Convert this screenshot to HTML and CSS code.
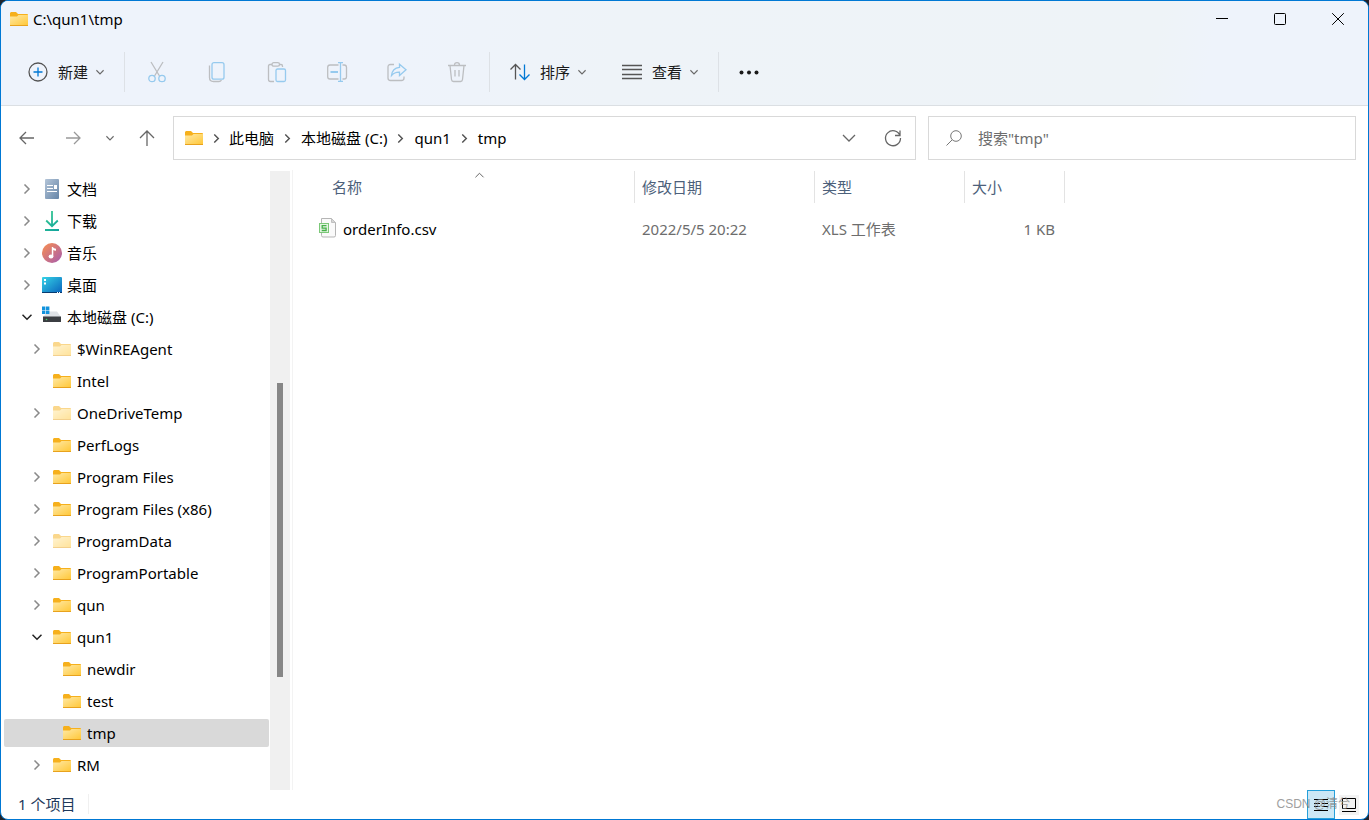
FILE: index.html
```html
<!DOCTYPE html>
<html lang="zh-CN">
<head>
<meta charset="utf-8">
<title>C:\qun1\tmp</title>
<link rel="stylesheet" href="styles.css">
</head>
<body>
<svg class="defs" aria-hidden="true">
  <defs>
    <linearGradient id="g-folder" x1="0" y1="0" x2="1" y2="1"><stop offset="0" stop-color="#ffe9a6"/><stop offset="1" stop-color="#ffc83a"/></linearGradient>
    <linearGradient id="g-doc" x1="0" y1="0" x2="1" y2="1"><stop offset="0" stop-color="#b4c5d8"/><stop offset="1" stop-color="#6585a8"/></linearGradient>
    <linearGradient id="g-down" gradientUnits="userSpaceOnUse" x1="0" y1="0" x2="20" y2="20"><stop offset="0" stop-color="#3ccf8e"/><stop offset="1" stop-color="#0c9f9f"/></linearGradient>
    <linearGradient id="g-music" x1="0" y1="0" x2="1" y2="1"><stop offset="0.1" stop-color="#f28a58"/><stop offset="1" stop-color="#a55bb0"/></linearGradient>
    <linearGradient id="g-desk" x1="0" y1="0" x2="1" y2="1"><stop offset="0" stop-color="#35d3e6"/><stop offset="1" stop-color="#0a63bd"/></linearGradient>
    <symbol id="folder" viewBox="0 0 20 20"><path d="M1 4.600q0-1.600 1.200-1.600H7l2 2h9.200q.8 0 .8 1v4H1z" fill="#f6b01c"/><path d="M1 7.500h7L9.500 6H19v10H1z" fill="url(#g-folder)"/><path d="M1 16h18v1H1z" fill="#e8a21d"/></symbol>
    <symbol id="chev-r" viewBox="0 0 10 10"><path d="M2.500 .500 7 5 2.500 9.500"/></symbol>
    <symbol id="chev-d" viewBox="0 0 10 10"><path d="M.500 2.800 5 7.300 9.500 2.800"/></symbol>
  </defs>
</svg>

<div class="window">
  <header class="top">
    <div class="titlebar">
      <svg class="icon"><use href="#folder"/></svg>
      <h1 class="title">C:\qun1\tmp</h1>
      <div class="caption">
        <button class="cap" aria-label="最小化"><svg viewBox="0 0 12 12"><path d="M0 5.500h12"/></svg></button>
        <button class="cap" aria-label="最大化"><svg viewBox="0 0 12 12"><rect x=".5" y=".5" width="11" height="11" rx="1"/></svg></button>
        <button class="cap" aria-label="关闭"><svg viewBox="0 0 12 12"><path d="M.2.2l11.600 11.600M11.800.2.2 11.800"/></svg></button>
      </div>
    </div>
    <div class="toolbar">
      <button class="tool">
        <svg class="icon line" viewBox="0 0 20 20"><circle cx="10" cy="10" r="9"/><path class="blue" d="M10 5.500v9M5.500 10h9"/></svg>
        <span>新建</span><svg class="tiny"><use href="#chev-d"/></svg>
      </button>
      <span class="sep"></span>
      <div class="group">
        <button class="act" aria-label="剪切"><svg class="icon dim" viewBox="0 0 20 20"><path d="M4 0l8.500 14M16 0 7.500 14"/><g class="sky"><circle cx="5" cy="16.500" r="3.200"/><circle cx="15" cy="16.500" r="3.200"/></g></svg></button>
        <button class="act" aria-label="复制"><svg class="icon dim" viewBox="0 0 20 20"><path d="M2.500 3.500v12q0 4 4 4H12q1.500 0 2.500-1.300"/><rect class="sky" x="5" y=".7" width="12" height="16.500" rx="2"/></svg></button>
        <button class="act" aria-label="粘贴"><svg class="icon dim" viewBox="0 0 20 20"><path d="M5 2.500H3q-1.500 0-1.500 1.500v13.500q0 2 2 2H7M12 2.500h2q1.500 0 1.500 1.500v1"/><rect x="5" y=".7" width="7.500" height="3.500" rx="1.700"/><rect class="sky" x="9" y="7" width="9.500" height="12.500" rx="1.500"/></svg></button>
        <button class="act" aria-label="重命名"><svg class="icon dim" viewBox="0 0 20 20"><path d="M11.500 3H3Q.7 3 .7 5.300v9.400Q.7 17 3 17h8.500M15.500 3h1.700q2.300 0 2.300 2.300v9.400q0 2.300-2.300 2.300h-1.700"/><path class="sky" d="M13.500.7v18.600M11 .7h5M11 19.300h5"/><path class="sky bold" d="M3.500 10H11"/></svg></button>
        <button class="act" aria-label="共享"><svg class="icon dim" viewBox="0 0 20 20"><path d="M7 2.500H3.500Q1 2.500 1 5v11q0 2.500 2.500 2.500h11Q17 18.500 17 16v-1.500"/><path class="sky" d="M12.500 2.200 19 7.800l-6.500 5.700v-3.300q-5-.2-8 3.300.8-7.300 8-8.100z"/></svg></button>
        <button class="act" aria-label="删除"><svg class="icon dim" viewBox="0 0 20 20"><path d="M1 3.500h18M3 3.500l1.500 14q.2 2 2 2h7q1.800 0 2-2l1.500-14M7.500 3.200q0-2.500 2.500-2.500t2.500 2.500M8 8v6.500M12 8v6.500"/></svg></button>
      </div>
      <span class="sep"></span>
      <div class="group">
        <button class="tool">
          <svg class="icon line" viewBox="0 0 20 20"><path d="M5.500 17.500V2.500M.5 7.500l5-5 5 5"/><path class="blue" d="M14.500 2.500v15M9.500 12.500l5 5 5-5"/></svg>
          <span>排序</span><svg class="tiny"><use href="#chev-d"/></svg>
        </button>
        <button class="tool">
          <svg class="icon line" viewBox="0 0 20 20"><path d="M0 3.500h20M0 7.500h20M0 12.500h20M0 16.500h20"/></svg>
          <span>查看</span><svg class="tiny"><use href="#chev-d"/></svg>
        </button>
      </div>
      <span class="sep"></span>
      <button class="tool" aria-label="查看更多"><svg class="icon dots" viewBox="0 0 20 20"><circle cx="2.500" cy="10.500" r="2"/><circle cx="10" cy="10.500" r="2"/><circle cx="17.500" cy="10.500" r="2"/></svg></button>
    </div>
  </header>

  <nav class="navbar">
    <div class="history">
      <button class="nav" aria-label="后退"><svg class="nav-icon" viewBox="0 0 16 16"><path d="M15 8H1M7 2 1 8l6 6"/></svg></button>
      <button class="nav faint" aria-label="前进"><svg class="nav-icon" viewBox="0 0 16 16"><path d="M1 8h14M9 2l6 6-6 6"/></svg></button>
      <button class="nav slim" aria-label="最近的位置"><svg class="tiny"><use href="#chev-d"/></svg></button>
      <button class="nav" aria-label="向上"><svg class="nav-icon" viewBox="0 0 16 16"><path d="M8 16V1M1 8l7-7 7 7"/></svg></button>
    </div>
    <div class="fields">
      <div class="address">
        <svg class="icon"><use href="#folder"/></svg>
        <svg class="arrow"><use href="#chev-r"/></svg><a href="#">此电脑</a>
        <svg class="arrow"><use href="#chev-r"/></svg><a href="#">本地磁盘 (C:)</a>
        <svg class="arrow"><use href="#chev-r"/></svg><a href="#">qun1</a>
        <svg class="arrow"><use href="#chev-r"/></svg><a href="#">tmp</a>
        <button class="box-btn push" aria-label="以前的位置"><svg viewBox="0 0 16 16"><path d="M2 5l6 6 6-6"/></svg></button>
        <button class="box-btn" aria-label="刷新"><svg viewBox="0 0 16 16"><path d="M15 5.500A7.500 7.500 0 1 0 15.500 8M15 .5v5h-5"/></svg></button>
      </div>
      <label class="search">
        <svg viewBox="0 0 16 16"><circle cx="10" cy="6" r="5.300"/><path d="M6.200 9.800.5 15.500"/></svg>
        <input type="search" placeholder='搜索"tmp"' aria-label="搜索">
      </label>
    </div>
  </nav>

  <div class="body">
    <aside class="side">
      <ul class="tree">
        <li class="row"><svg class="twist"><use href="#chev-r"/></svg><svg class="icon" viewBox="0 0 20 20"><rect x="3" width="14" height="20" rx="1" fill="url(#g-doc)"/><path d="M5 6.500h6M5 9.500h6M5 12.500h10" stroke="#fff" stroke-width="1.200"/><path d="M12 6h3v4h-3z" fill="#fff"/></svg><span>文档</span></li>
        <li class="row"><svg class="twist"><use href="#chev-r"/></svg><svg class="icon" viewBox="0 0 20 20"><path d="M10 0v15M4.200 9.500 10 15.200l5.800-5.700M3 19h14" fill="none" stroke="url(#g-down)" stroke-width="1.800"/></svg><span>下载</span></li>
        <li class="row"><svg class="twist"><use href="#chev-r"/></svg><svg class="icon" viewBox="0 0 20 20"><circle cx="10" cy="10" r="10" fill="url(#g-music)"/><ellipse cx="9" cy="13.500" rx="2.400" ry="2" fill="#fff"/><path d="M9.800 4h1q.8 1.800 3.200 1.800v2q-1.800 0-2.700-.8v6.500H9.800z" fill="#fff"/></svg><span>音乐</span></li>
        <li class="row"><svg class="twist"><use href="#chev-r"/></svg><svg class="icon" viewBox="0 0 20 20"><rect y="2" width="20" height="16" rx="1" fill="url(#g-desk)"/><path d="M0 17h20v1H0z" fill="#083b70"/><path d="M2 4h2v2H2zM2 7.500h2v2H2z" fill="#fff"/><path d="M15 17h1v1h-1zM17 17h1v1h-1z" fill="#fff"/></svg><span>桌面</span></li>
        <li class="row"><svg class="twist open"><use href="#chev-d"/></svg><svg class="icon" viewBox="0 0 20 20"><path d="M6 4.500h9l4 5.500H1z" fill="#dfe2e6"/><path d="M1 9.500h18v5.500H1z" fill="#3b3e42"/><circle cx="4.500" cy="12.500" r=".8" fill="#45d36b"/><path d="M0-.5h3.400v3.400H0zM4-.5h3.400v3.400H4zM0 3.500h3.400v3.400H0zM4 3.500h3.400v3.400H4z" fill="#1293dd"/></svg><span>本地磁盘 (C:)</span></li>
        <li class="row sub"><svg class="twist"><use href="#chev-r"/></svg><svg class="icon hidden-item"><use href="#folder"/></svg><span>$WinREAgent</span></li>
        <li class="row sub"><i class="twist"></i><svg class="icon"><use href="#folder"/></svg><span>Intel</span></li>
        <li class="row sub"><svg class="twist"><use href="#chev-r"/></svg><svg class="icon hidden-item"><use href="#folder"/></svg><span>OneDriveTemp</span></li>
        <li class="row sub"><i class="twist"></i><svg class="icon"><use href="#folder"/></svg><span>PerfLogs</span></li>
        <li class="row sub"><svg class="twist"><use href="#chev-r"/></svg><svg class="icon"><use href="#folder"/></svg><span>Program Files</span></li>
        <li class="row sub"><svg class="twist"><use href="#chev-r"/></svg><svg class="icon"><use href="#folder"/></svg><span>Program Files (x86)</span></li>
        <li class="row sub"><svg class="twist"><use href="#chev-r"/></svg><svg class="icon hidden-item"><use href="#folder"/></svg><span>ProgramData</span></li>
        <li class="row sub"><svg class="twist"><use href="#chev-r"/></svg><svg class="icon"><use href="#folder"/></svg><span>ProgramPortable</span></li>
        <li class="row sub"><svg class="twist"><use href="#chev-r"/></svg><svg class="icon"><use href="#folder"/></svg><span>qun</span></li>
        <li class="row sub"><svg class="twist open"><use href="#chev-d"/></svg><svg class="icon"><use href="#folder"/></svg><span>qun1</span></li>
        <li class="row leaf"><i class="twist"></i><svg class="icon"><use href="#folder"/></svg><span>newdir</span></li>
        <li class="row leaf"><i class="twist"></i><svg class="icon"><use href="#folder"/></svg><span>test</span></li>
        <li class="row leaf selected"><i class="twist"></i><svg class="icon"><use href="#folder"/></svg><span>tmp</span></li>
        <li class="row sub"><svg class="twist"><use href="#chev-r"/></svg><svg class="icon"><use href="#folder"/></svg><span>RM</span></li>
      </ul>
      <div class="scroll"><div class="thumb"></div></div>
    </aside>
    <main class="files">
      <table class="list">
        <colgroup><col class="c-name"><col class="c-date"><col class="c-type"><col class="c-size"></colgroup>
        <thead><tr>
          <th class="name-head">名称<svg class="sort" viewBox="0 0 10 10"><path d="M.5 7 5 2.500 9.500 7"/></svg></th>
          <th>修改日期</th><th>类型</th><th class="last">大小</th>
        </tr></thead>
        <tbody><tr>
          <td><div class="file"><svg class="icon" viewBox="0 0 20 20"><path d="M2.500.5h10l4 4v13q0 1.500-1.500 1.500H4q-1.500 0-1.500-1.500z" fill="#fafafa" stroke="#b5b5b5"/><path d="M12.500.5v4h4z" fill="#d5d5d5" stroke="#c0c0c0"/><rect x=".5" y="5.500" width="9" height="9" fill="#e4f5e2" stroke="#7cc878"/><path d="M7.500 7.700H3.200v2.400h3.900v2.400H2.700" fill="none" stroke="#46b04a" stroke-width="1.300"/></svg><span>orderInfo.csv</span></div></td>
          <td>2022/5/5 20:22</td><td>XLS 工作表</td><td class="num">1 KB</td>
        </tr></tbody>
      </table>
    </main>
  </div>

  <footer class="status">
    <span class="count">1 个项目</span>
    <div class="views">
      <button class="view on" aria-label="详细信息"><svg viewBox="0 0 14 14"><path d="M0 1.500h14M0 5.500h6M8 5.500h6M0 8.500h6M8 8.500h6M0 12.500h14"/></svg></button>
      <button class="view" aria-label="大图标"><svg viewBox="0 0 14 14"><path d="M.5.5h13v10H.5zM0 13.500h14"/></svg></button>
    </div>
    <span class="mark">CSDN @清兮</span>
  </footer>
</div>
</body>
</html>
```

FILE: styles.css
```css
* { box-sizing: border-box; }
body {
  margin: 0;
  background: #20242b;
  font: 15px/20px "Noto Sans", "Noto Sans CJK SC", sans-serif;
  color: #000;
}
button, input { font: inherit; color: inherit; }
button { display: flex; align-items: center; justify-content: center; padding: 0; border: 0; background: none; }
svg { flex: none; fill: none; stroke: none; overflow: visible; }
.defs { position: absolute; width: 0; height: 0; }
.icon { width: 20px; height: 20px; }

.window {
  display: flex;
  flex-direction: column;
  min-height: 100vh;
  border: 1px solid #0078d4;
  border-radius: 8px;
  background: #fff;
  overflow: hidden;
}

.top { border-bottom: 1px solid #dbdfe3; background: linear-gradient(100deg, #eef3fb 30%, #eef3f8 45%, #eef3f7 84%, #eef3fb 88%); }
.titlebar { display: flex; align-items: center; height: 36px; padding: 0 1px 0 8px; }
.title { margin: 0 0 0 4px; font-size: 15px; line-height: 20px; font-weight: 400; }
.caption { display: flex; margin-left: auto; }
.cap { width: 58px; height: 36px; }
.cap svg { width: 12px; height: 12px; stroke: #000; }

.toolbar { display: flex; align-items: center; height: 68px; padding: 2px 17px 0; }
.group { display: flex; gap: 16px; }
.tool { height: 40px; padding: 0 10px; gap: 8px; color: #1a1a1a; }
.tool span { margin-left: 2px; }
.act { width: 44px; height: 40px; }
.sep { width: 1px; height: 40px; margin: 0 10px; background: #dde1e6; }
.tiny { width: 8px; height: 8px; stroke: #6a6a6a; stroke-width: 1.4; }
.line { stroke: #555; stroke-width: 1.3; }
.dim { stroke: #bcbec1; stroke-width: 1.3; }
.blue { stroke: #0078d4; }
.sky { stroke: #96caee; }
.bold { stroke-width: 2; }
.dots { fill: #1a1a1a; }

.navbar { display: flex; gap: 3px; padding: 10px 12px 10px 3px; }
.history { display: flex; flex: none; }
.nav { width: 46px; height: 44px; }
.nav.slim { width: 28px; }
.nav-icon { width: 16px; height: 16px; stroke: #666; stroke-width: 1.3; }
.faint .nav-icon { stroke: #999; }
.fields { display: grid; grid-template-columns: 743fr 428fr; gap: 12px; flex: 1; }
.address, .search { display: flex; align-items: center; height: 44px; border: 1px solid #d9d9d9; }
.address { padding: 0 12px 0 10px; }
.address a { color: inherit; text-decoration: none; white-space: nowrap; }
.arrow { width: 9px; height: 9px; margin: 0 9px; stroke: #555; stroke-width: 1.6; }
.icon + .arrow { margin: 0 8px; }
.box-btn { width: 20px; height: 40px; margin-left: 24px; }
.box-btn.push { margin-left: auto; }
.box-btn svg { width: 16px; height: 16px; stroke: #666; stroke-width: 1.3; }
.search { padding: 0 17px; gap: 16px; }
.search svg { width: 16px; height: 16px; stroke: #777; }
.search input { flex: 1; min-width: 0; padding: 0; border: 0; outline: 0; background: none; }
.search input::placeholder { color: #6d6d6d; opacity: 1; }

.body { display: flex; flex: 1; }
.side { display: flex; width: 292px; border-right: 1px solid #f3f3f3; }
.tree { flex: 1; margin: 0; padding: 3px 1px 7px 3px; list-style: none; }
.row { display: flex; align-items: center; height: 28px; margin: 2px 0; padding-left: 18px; border-radius: 2px; white-space: nowrap; }
.row + .row { margin-top: 4px; }
.row .icon { margin: 0 5px 0 10px; }
.row.sub { padding-left: 28px; }
.row.leaf { padding-left: 38px; }
.row.selected { background: #d9d9d9; }
.twist { width: 10px; height: 10px; stroke: #8a8a8a; stroke-width: 1.5; }
.twist.open { stroke: #222; }
.hidden-item { opacity: .5; }
.scroll { width: 20px; margin: 1px 2px 0 0; padding-top: 212px; background: #f0f0f0; }
.thumb { width: 6px; height: 294px; margin: 0 auto 0 7px; background: #868686; }

.files { flex: 1; min-width: 0; padding: 1px 0 0 21px; }
.list { width: 751px; table-layout: fixed; border-collapse: separate; border-spacing: 0; }
.c-name { width: 320px; }
.c-date { width: 180px; }
.c-type { width: 150px; }
.c-size { width: 101px; }
.list th { height: 32px; padding: 0 0 0 7px; border-left: 1px solid #e3e3e3; font-weight: 400; text-align: left; color: #4c607a; }
.list th.last { border-right: 1px solid #e3e3e3; }
.list th.name-head { position: relative; padding-left: 18px; border-left: 0; }
.sort { position: absolute; top: 0; left: 161px; width: 9px; height: 9px; stroke: #555; }
.list td { height: 52px; padding: 0 0 0 8px; color: #6d6d6d; }
.list td:first-child { padding-left: 5px; }
.list td.num { padding-right: 10px; text-align: right; }
.file { display: flex; align-items: center; gap: 4px; color: #000; }
.file .icon { margin-bottom: 2px; }

.status { position: relative; display: flex; align-items: center; height: 29px; padding: 0 5px 2px 17px; }
.count { padding-right: 13px; border-right: 1px solid #f0f0f0; color: #1e395b; }
.views { display: flex; align-self: flex-start; margin-left: auto; }
.view { width: 28px; height: 29px; border: 1px solid transparent; }
.view.on { border-color: #26a0da; background: #cce8f6; }
.view svg { width: 14px; height: 14px; stroke: #000; }
.view:not(.on) svg { background: #f3f3f3; box-shadow: 0 0 0 3px #f3f3f3; }
.mark { position: absolute; right: 18px; bottom: 5px; font: 12px/20px "Liberation Sans", "Noto Sans CJK SC", sans-serif; color: #888; opacity: .8; }
```
